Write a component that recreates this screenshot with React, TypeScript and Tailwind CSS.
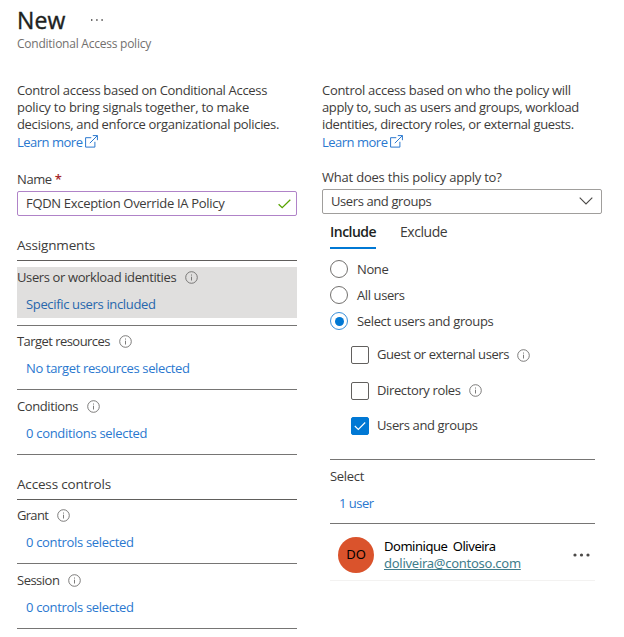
import type { ReactNode } from "react";

function ExternalIcon() {
  return (
    <svg width="13" height="13" viewBox="0 0 13 13" fill="none" stroke="#2a78cf" strokeWidth="1" className="mb-[2px] ml-[3px]">
      <path d="M6.3 2.7H.6V12.1H9.9V6.8" />
      <path d="M7.8 .6H12.4V5.2M12.4 .6L4.8 8.2" />
    </svg>
  );
}

function InfoIcon() {
  return (
    <svg width="13" height="13" viewBox="0 0 13 13" fill="none" stroke="#6e6d6c" strokeWidth="0.9" className="shrink-0">
      <circle cx="6.5" cy="6.5" r="5.8" />
      <path d="M6.5 5.7V9.5M6.5 3.5V4.6" />
    </svg>
  );
}

function LearnMore() {
  return (
    <div className="flex h-[17.3px] items-center text-[#2a78cf]">
      <span className="pt-px tracking-[-0.5px]">Learn more</span>
      <ExternalIcon />
    </div>
  );
}

function Section({ label, value, labelClass, valueClass, selected = false }: {
  label: string;
  value: string;
  labelClass: string;
  valueClass: string;
  selected?: boolean;
}) {
  return (
    <div className="h-[64.45px] border-b border-[#767574] pt-[6px]">
      <div className={selected ? "h-[51px] bg-[#e0dfde]" : "h-[51px]"}>
        <div className="flex h-[20px] items-center gap-[9px]">
          <span className={labelClass}>{label}</span>
          <InfoIcon />
        </div>
        <div className="flex h-[34px] items-center pl-[9px]">
          <span className={(selected ? "text-[#2767ad] " : "text-[#2a78cf] ") + valueClass}>{value}</span>
        </div>
      </div>
    </div>
  );
}

function Radio({ checked = false, children }: { checked?: boolean; children: ReactNode }) {
  return (
    <div className="flex h-[26px] items-center gap-[9px]">
      <span className={"flex size-[18px] items-center justify-center rounded-full border " + (checked ? "border-[#3a90da]" : "border-[#72706e]")}>
        {checked && <span className="size-[9px] rounded-full bg-[#0078d4]" />}
      </span>
      {children}
    </div>
  );
}

function Check({ checked = false, info = false, children }: { checked?: boolean; info?: boolean; children: ReactNode }) {
  return (
    <div className="flex h-[35.5px] items-center pl-[21px]">
      <span className={"mr-2 flex size-[18px] items-center justify-center rounded-[2px] border " + (checked ? "border-[#0078d4] bg-[#0078d4]" : "border-[#62605e]")}>
        {checked && (
          <svg width="12" height="10" viewBox="0 0 12 10" fill="none" stroke="white" strokeWidth="1.1">
            <path d="M.8 5L4.3 8.4L11.2 1.5" />
          </svg>
        )}
      </span>
      {children}
      {info && <span className="ml-[8px]"><InfoIcon /></span>}
    </div>
  );
}

export default function App() {
  return (
    <div className="h-[637px] w-[624px] overflow-hidden whitespace-nowrap bg-white pl-[17px] font-['Open_Sans','Noto_Sans',sans-serif] text-[13px] leading-[17.3px] text-[#3d3b3a]">
      <header className="h-[81.7px] pt-[4px]">
        <div className="flex h-[32px] items-center">
          <h1 className="text-[23px] leading-[32px] tracking-[0.1px] text-[#201f1e] [-webkit-text-stroke:0.4px_#201f1e]">New</h1>
          <svg width="12" height="2" viewBox="0 0 12 2" fill="#3d3b3a" className="ml-[26px]">
            <path d="M0 .3h1.4v1.4H0zM5.2 .3h1.4v1.4H5.2zM10.4 .3h1.4v1.4h-1.4z" />
          </svg>
        </div>
        <p className="text-[12px] leading-[16px] tracking-[-0.24px] text-[#72706e]">Conditional Access policy</p>
      </header>

      <div className="flex gap-[25px]">
        <div className="w-[280px]">
          <p>
            <span className="tracking-[-0.32px]">Control access based on Conditional Access</span><br />
            <span className="tracking-[-0.24px]">policy to bring signals together, to make</span><br />
            <span className="tracking-[-0.33px]">decisions, and enforce organizational policies.</span>
          </p>
          <LearnMore />
          <div className="flex h-[40.3px] items-end pb-[3px]">
            <span className="tracking-[-0.4px]">Name <span className="font-semibold text-[#a4262c]">*</span></span>
          </div>
          <div className="flex h-[25px] items-center justify-between rounded-[2px] border border-[#b083c8] pl-2 pr-[5px]">
            <span className="tracking-[-0.31px]">FQDN Exception Override IA Policy</span>
            <svg width="13" height="10" viewBox="0 0 13 10" fill="none" stroke="#57a300" strokeWidth="1.3">
              <path d="M.6 5.2L4.2 8.7L12.3 .8" />
            </svg>
          </div>
          <h2 className="flex h-[45.2px] items-end border-b border-[#605e5c] pb-[6px] text-[13.5px] tracking-[-0.18px]">Assignments</h2>
          <Section label="Users or workload identities" value="Specific users included" labelClass="tracking-[-0.38px]" valueClass="tracking-[-0.34px]" selected />
          <Section label="Target resources" value="No target resources selected" labelClass="tracking-[-0.55px]" valueClass="tracking-[-0.36px]" />
          <Section label="Conditions" value="0 conditions selected" labelClass="tracking-[-0.4px]" valueClass="tracking-[-0.3px]" />
          <h2 className="flex h-[45.2px] items-end border-b border-[#605e5c] pb-[6px] text-[13.5px] tracking-[-0.17px]">Access controls</h2>
          <Section label="Grant" value="0 controls selected" labelClass="tracking-[-0.7px]" valueClass="tracking-[-0.32px]" />
          <Section label="Session" value="0 controls selected" labelClass="tracking-[-0.5px]" valueClass="tracking-[-0.32px]" />
        </div>

        <div className="w-[280px]">
          <p>
            <span className="tracking-[-0.29px]">Control access based on who the policy will</span><br />
            <span className="tracking-[-0.35px]">apply to, such as users and groups, workload</span><br />
            <span className="tracking-[-0.37px]">identities, directory roles, or external guests.</span>
          </p>
          <LearnMore />
          <div className="flex h-[38px] items-end pb-[3px]">
            <span className="tracking-[-0.21px]">What does this policy apply to?</span>
          </div>
          <div className="flex h-[25px] items-center justify-between rounded-[2px] border border-[#a09e9c] pl-2 pr-[8px]">
            <span className="tracking-[-0.4px]">Users and groups</span>
            <svg width="14" height="8" viewBox="0 0 14 8" fill="none" stroke="#4b4947" strokeWidth="1.1">
              <path d="M.7 .7L7 7L13.3 .7" />
            </svg>
          </div>
          <div className="w-[273px] pl-[8px]">
            <div className="flex h-[35px] gap-6 pt-[9px] text-[14px]">
              <span className="w-[46px] border-b-2 border-[#0078d4] font-semibold tracking-[-0.52px] text-[#201f1e]">Include</span>
              <span className="tracking-[-0.45px]">Exclude</span>
            </div>
            <div className="pt-[7.5px]">
              <Radio><span className="pt-px tracking-[-0.4px]">None</span></Radio>
              <Radio><span className="pt-px tracking-[-0.4px]">All users</span></Radio>
              <Radio checked><span className="pt-px tracking-[-0.35px]">Select users and groups</span></Radio>
            </div>
            <div className="h-[125.5px] border-b border-[#767574] pt-[3px]">
              <Check info><span className="tracking-[-0.42px]">Guest or external users</span></Check>
              <Check info><span className="tracking-[-0.37px]">Directory roles</span></Check>
              <Check checked><span className="tracking-[-0.38px]">Users and groups</span></Check>
            </div>
            <div className="h-[64px] border-b border-[#767574] pt-[8px]">
              <div className="tracking-[-0.3px]">Select</div>
              <div className="pl-[9px] pt-[9.5px] tracking-[-0.5px] text-[#2a78cf]">1 user</div>
            </div>
            <div className="flex h-[57px] items-center border-b border-[#f3f2f1] pl-[8px] pr-[5px] pt-[6px] font-['Noto_Sans','Open_Sans',sans-serif] text-[13px] text-black">
              <span className="flex size-[36px] items-center justify-center rounded-full bg-[#da532c]">DO</span>
              <div className="ml-[10px] flex-1">
                <div className="tracking-[-0.47px] [word-spacing:2.5px]">Dominique Oliveira</div>
                <div className="tracking-[-0.27px] text-[#3f7d8c] underline">doliveira@contoso.com</div>
              </div>
              <svg width="17" height="4" viewBox="0 0 17 4" fill="#4b4947">
                <circle cx="2" cy="2" r="1.6" /><circle cx="8.5" cy="2" r="1.6" /><circle cx="15" cy="2" r="1.6" />
              </svg>
            </div>
          </div>
        </div>
      </div>
    </div>
  );
}
